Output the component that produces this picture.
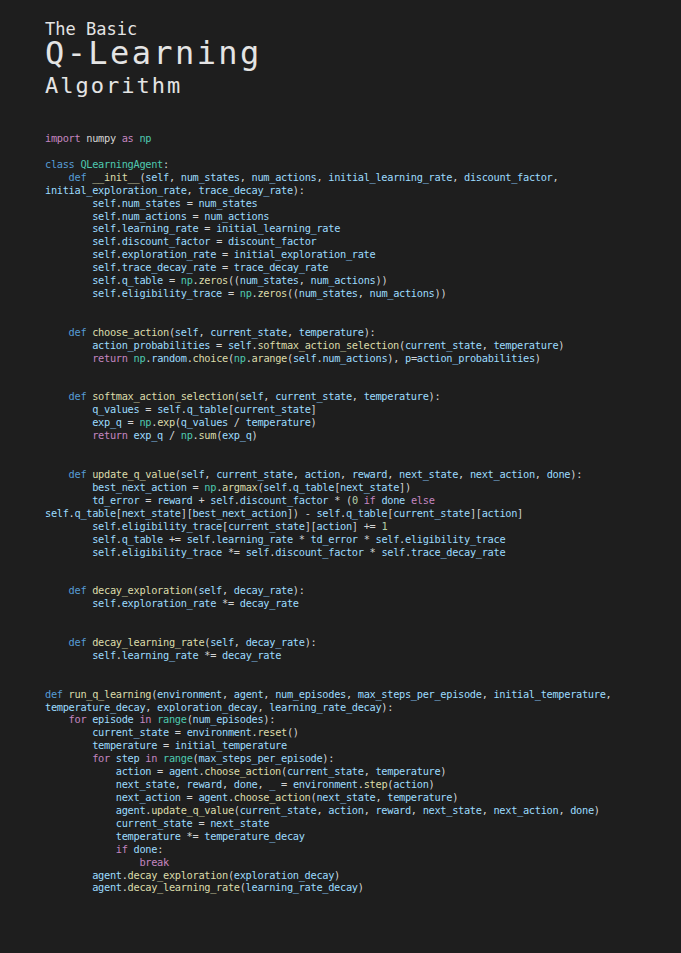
import React from "react";

const CODE = `import numpy as np

class QLearningAgent:
    def __init__(self, num_states, num_actions, initial_learning_rate, discount_factor,
initial_exploration_rate, trace_decay_rate):
        self.num_states = num_states
        self.num_actions = num_actions
        self.learning_rate = initial_learning_rate
        self.discount_factor = discount_factor
        self.exploration_rate = initial_exploration_rate
        self.trace_decay_rate = trace_decay_rate
        self.q_table = np.zeros((num_states, num_actions))
        self.eligibility_trace = np.zeros((num_states, num_actions))


    def choose_action(self, current_state, temperature):
        action_probabilities = self.softmax_action_selection(current_state, temperature)
        return np.random.choice(np.arange(self.num_actions), p=action_probabilities)


    def softmax_action_selection(self, current_state, temperature):
        q_values = self.q_table[current_state]
        exp_q = np.exp(q_values / temperature)
        return exp_q / np.sum(exp_q)


    def update_q_value(self, current_state, action, reward, next_state, next_action, done):
        best_next_action = np.argmax(self.q_table[next_state])
        td_error = reward + self.discount_factor * (0 if done else
self.q_table[next_state][best_next_action]) - self.q_table[current_state][action]
        self.eligibility_trace[current_state][action] += 1
        self.q_table += self.learning_rate * td_error * self.eligibility_trace
        self.eligibility_trace *= self.discount_factor * self.trace_decay_rate


    def decay_exploration(self, decay_rate):
        self.exploration_rate *= decay_rate


    def decay_learning_rate(self, decay_rate):
        self.learning_rate *= decay_rate


def run_q_learning(environment, agent, num_episodes, max_steps_per_episode, initial_temperature,
temperature_decay, exploration_decay, learning_rate_decay):
    for episode in range(num_episodes):
        current_state = environment.reset()
        temperature = initial_temperature
        for step in range(max_steps_per_episode):
            action = agent.choose_action(current_state, temperature)
            next_state, reward, done, _ = environment.step(action)
            next_action = agent.choose_action(next_state, temperature)
            agent.update_q_value(current_state, action, reward, next_state, next_action, done)
            current_state = next_state
            temperature *= temperature_decay
            if done:
                break
        agent.decay_exploration(exploration_decay)
        agent.decay_learning_rate(learning_rate_decay)`;

const CONTROL = new Set(["import", "as", "return", "if", "else", "for", "in", "break"]);
const STORAGE = new Set(["def", "class"]);

function tokenize(line) {
  const re = /(\s+)|([A-Za-z_][A-Za-z0-9_]*)|(\d+)|(.)/g;
  const toks = [];
  let m;
  while ((m = re.exec(line))) {
    toks.push({ text: m[0], kind: m[1] ? "ws" : m[2] ? "id" : m[3] ? "num" : "punct", idx: m.index });
  }
  let prevWord = null;
  return toks.map((t, i) => {
    let color = "text-[#d4d4d4]";
    if (t.kind === "id") {
      const rest = line.slice(t.idx + t.text.length).trimStart();
      if (CONTROL.has(t.text)) color = "text-[#c586c0]";
      else if (STORAGE.has(t.text)) color = "text-[#569cd6]";
      else if (prevWord === "class") color = "text-[#4ec9b0]";
      else if (t.text === "np" || t.text === "range") color = "text-[#4ec9b0]";
      else if (t.text === "numpy") color = "text-[#d4d4d4]";
      else if (prevWord === "def" || rest.startsWith("(")) color = "text-[#dcdcaa]";
      else color = "text-[#9cdcfe]";
      prevWord = t.text;
    } else if (t.kind === "num") {
      color = "text-[#b5cea8]";
    }
    return (
      <span key={i} className={color}>
        {t.text}
      </span>
    );
  });
}

export default function App() {
  const lines = CODE.split("\n");
  return (
    <div className="min-h-[953px] w-full bg-[#1e1e1e] pl-[45px] pt-[20px] font-['DejaVu_Sans_Mono',monospace] text-[#e4e4e4]">
      <div className="text-[17px] leading-[18px]">The Basic</div>
      <div className="text-[32px] leading-[31px] tracking-[2.4px]">Q-Learning</div>
      <div className="text-[22px] leading-[34px] tracking-[2px]">Algorithm</div>
      <div className="mt-[29px] whitespace-pre text-[10.3px] leading-[12.93px] tracking-[-0.3px]">
        {lines.map((l, i) => (
          <div key={i} className="h-[12.93px]">
            {l.length ? tokenize(l) : " "}
          </div>
        ))}
      </div>
    </div>
  );
}
